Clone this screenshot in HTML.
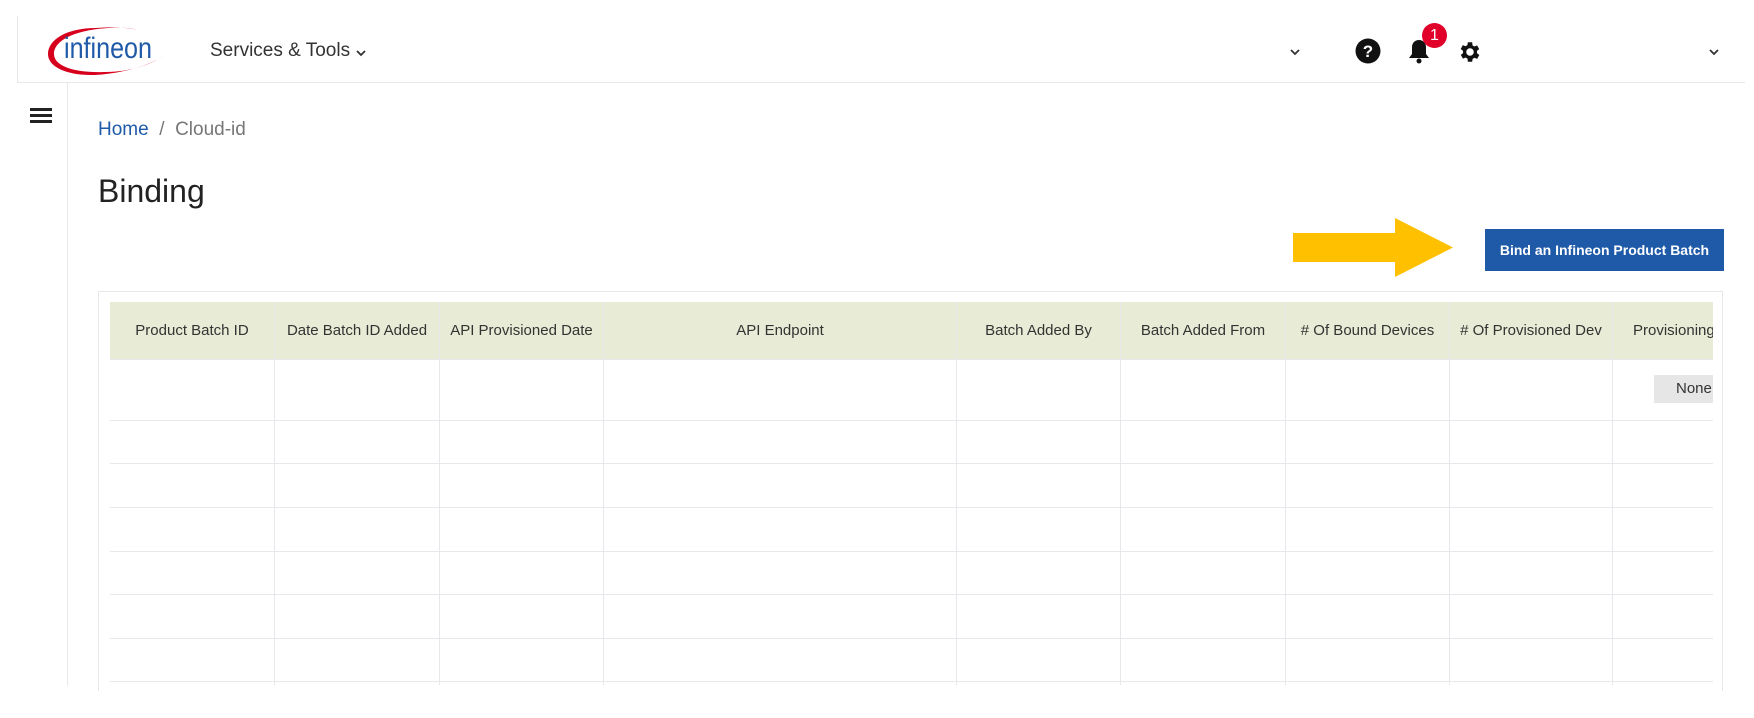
<!DOCTYPE html>
<html><head><meta charset="utf-8"><style>
*{margin:0;padding:0;box-sizing:border-box}
body{width:1754px;height:718px;background:#fff;font-family:"Liberation Sans",sans-serif;position:relative;overflow:hidden;color:#333}
.abs{position:absolute}
.hdr{left:17px;top:16px;width:1728px;height:67px;border-left:1px solid #e6e8ec;border-bottom:1px solid #e6e8ec}
.side{left:67px;top:83px;width:1px;height:603px;background:#e6e8ec}
.col{position:absolute;top:302px;width:1px;height:383px;background:#e6e8ec}
.row{position:absolute;left:110px;width:1603px;height:1px;background:#e6e8ec}
.h{position:absolute;top:302px;height:57px;line-height:57px;font-size:15px;color:#333;white-space:nowrap;text-align:center;overflow:hidden}
</style></head><body>
<div class="abs hdr"></div>
<svg class="abs" style="left:46px;top:22px" width="122" height="58" viewBox="0 0 122 58">
<path d="M50 6 C20 6 2 18 2 32 C2 48 30 56 60 52 C85 49 105 42 118 34 C100 45 80 50 58 50 C28 51 8 44 8 32 C8 18 30 8 62 6 C75 5 85 6 92 8 C80 5 65 5 50 6Z" fill="#d6001c"/>
<text x="18" y="36" font-family="Liberation Sans Narrow,Liberation Sans,sans-serif" font-size="30" fill="#1f5aa8" textLength="88" lengthAdjust="spacingAndGlyphs">infineon</text>
</svg>
<div class="abs" style="left:210px;top:40px;font-size:19px;color:#333">Services &amp; Tools</div>
<svg class="abs" style="left:355px;top:49px" width="12" height="8"><path d="M2 2l4 4 4-4" stroke="#333" stroke-width="1.8" fill="none"/></svg>
<svg class="abs" style="left:1289px;top:48px" width="12" height="8"><path d="M2 2l4 4 4-4" stroke="#333" stroke-width="1.8" fill="none"/></svg>
<svg class="abs" style="left:1708px;top:48px" width="12" height="8"><path d="M2 2l4 4 4-4" stroke="#333" stroke-width="1.8" fill="none"/></svg>
<svg class="abs" style="left:1355px;top:38px" width="26" height="26" viewBox="0 0 26 26"><circle cx="13" cy="13" r="12.5" fill="#111"/><text x="13" y="19" text-anchor="middle" font-size="17" font-weight="bold" fill="#fff" font-family="Liberation Sans">?</text></svg>
<svg class="abs" style="left:1408px;top:38px" width="22" height="27" viewBox="0 0 22 27"><path d="M11 2c-4 0-7 3-7 7v7l-3 4h20l-3-4V9c0-4-3-7-7-7z" fill="#111"/><circle cx="11" cy="23" r="2.5" fill="#111"/></svg>
<div class="abs" style="left:1422px;top:23px;width:25px;height:25px;border-radius:50%;background:#e0002a;color:#fff;font-size:16px;text-align:center;line-height:25px">1</div>
<svg class="abs" style="left:1457px;top:39px" width="26" height="26" viewBox="0 0 24 24"><path fill="#111" d="M19.4 13a7.5 7.5 0 000-2l2.1-1.6-2-3.5-2.5 1a7 7 0 00-1.7-1L15 3h-4l-.4 2.7a7 7 0 00-1.7 1l-2.5-1-2 3.5L6.6 11a7.5 7.5 0 000 2l-2.1 1.6 2 3.5 2.5-1a7 7 0 001.7 1L11 21h4l.4-2.7a7 7 0 001.7-1l2.5 1 2-3.5zM13 15.5a3.5 3.5 0 110-7 3.5 3.5 0 010 7z" transform="translate(-1 0)"/></svg>
<div class="abs side"></div>
<div class="abs" style="left:30px;top:108px;width:22px;height:3px;background:#222;box-shadow:0 6px 0 #222,0 12px 0 #222"></div>
<div class="abs" style="left:98px;top:119px;font-size:19px;color:#777"><span style="color:#1f5aa8">Home</span>&nbsp; /&nbsp; Cloud-id</div>
<div class="abs" style="left:98px;top:173px;font-size:32px;color:#222">Binding</div>
<svg class="abs" style="left:1293px;top:218px" width="162" height="60"><path d="M0 15H102V0L160 29.5 102 59V44H0Z" fill="#ffc000"/></svg>
<div class="abs" style="left:1485px;top:229px;width:239px;height:42px;background:#1f5aa8;color:#fff;font-size:14px;font-weight:bold;line-height:42px;text-align:center">Bind an Infineon Product Batch</div>
<div class="abs" style="left:98px;top:291px;width:1625px;height:400px;border:1px solid #e6e8ec;border-bottom:none"></div>
<div class="abs" style="left:110px;top:302px;width:1603px;height:57px;background:#e8ebd5"></div>
<div class="col" style="left:274px"></div><div class="col" style="left:439px"></div><div class="col" style="left:603px"></div><div class="col" style="left:956px"></div><div class="col" style="left:1120px"></div><div class="col" style="left:1285px"></div><div class="col" style="left:1449px"></div><div class="col" style="left:1612px"></div>
<div class="row" style="top:359px"></div><div class="row" style="top:420px"></div><div class="row" style="top:463px"></div><div class="row" style="top:507px"></div><div class="row" style="top:551px"></div><div class="row" style="top:594px"></div><div class="row" style="top:638px"></div><div class="row" style="top:681px"></div>
<div class="h" style="left:110px;width:164px">Product Batch ID</div>
<div class="h" style="left:275px;width:164px">Date Batch ID Added</div>
<div class="h" style="left:440px;width:163px">API Provisioned Date</div>
<div class="h" style="left:604px;width:352px">API Endpoint</div>
<div class="h" style="left:957px;width:163px">Batch Added By</div>
<div class="h" style="left:1121px;width:164px">Batch Added From</div>
<div class="h" style="left:1286px;width:163px"># Of Bound Devices</div>
<div class="h" style="left:1450px;width:162px"># Of Provisioned Dev</div>
<div class="h" style="left:1633px;width:80px;text-align:left">Provisioning</div>
<div class="abs" style="left:1654px;top:375px;width:59px;height:28px;background:#e6e6e6;font-size:15px;line-height:28px;padding-left:22px;overflow:hidden">None</div>
</body></html>
